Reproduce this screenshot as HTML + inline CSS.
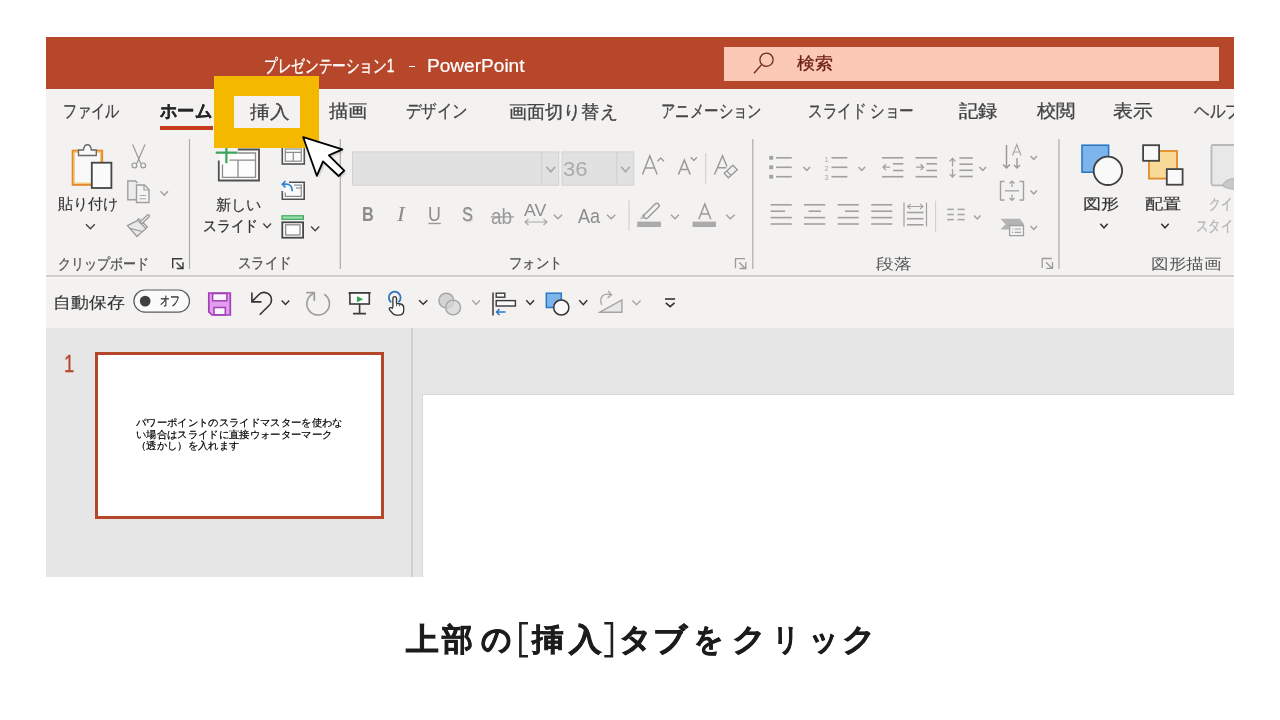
<!DOCTYPE html>
<html lang="ja"><head><meta charset="utf-8"><style>
*{margin:0;padding:0;box-sizing:border-box}
html,body{width:1280px;height:720px;overflow:hidden;background:#fff;font-family:"Liberation Sans",sans-serif}
.r{position:absolute}
.t{position:absolute;white-space:pre;line-height:1;transform-origin:0 0;-webkit-text-stroke:0.3px currentColor}
#shot{position:absolute;left:46px;top:37px;width:1188px;height:540px;overflow:hidden}
</style></head><body>
<div class="r" style="left:46px;top:37px;width:1188px;height:51.8px;background:#b7472a"></div>
<div class="r" style="left:724px;top:46.9px;width:495.2px;height:34.2px;background:#fcc9b7"></div>
<div class="r" style="left:46px;top:88.8px;width:1188px;height:187px;background:#f3f2f1"></div>
<div class="r" style="left:46px;top:277px;width:1188px;height:51px;background:#f3f2f1"></div>
<div class="r" style="left:46px;top:274.8px;width:1188px;height:2.6px;background:#d1cfcd"></div>
<div class="r" style="left:46px;top:277.4px;width:1188px;height:1.2px;background:#f8f7f6"></div>
<div class="r" style="left:46px;top:328px;width:1188px;height:249px;background:#e6e6e6"></div>
<div class="r" style="left:411.3px;top:328px;width:1.6px;height:249px;background:#d0d0d0"></div>
<div class="r" style="left:422px;top:394px;width:812px;height:183px;background:#d8d8d8"></div>
<div class="r" style="left:423px;top:395px;width:811px;height:182px;background:#fff"></div>
<div class="r" style="left:95.1px;top:352.3px;width:288.9px;height:166.4px;border:3.7px solid #b5462a;background:#fff"></div>
<div class="r" style="left:408.6px;top:65.7px;width:6px;height:1.5px;background:#fff"></div>
<div class="r" style="left:160px;top:125.8px;width:52.5px;height:4.6px;background:#c43e1c"></div>
<svg class="r" style="left:0;top:0" width="1280" height="720" viewBox="0 0 1280 720">
<circle cx="766.5" cy="59.7" r="6.6" fill="none" stroke="#6e2a1c" stroke-width="1.3"/><path d="M761.8 64.4L754 73.2" stroke="#6e2a1c" stroke-width="1.4"/>
<rect x="72.7" y="150.7" width="29.4" height="34.1" fill="#f9f9f9" stroke="#e3892b" stroke-width="2"/>
<rect x="74.2" y="152.2" width="26.4" height="31" fill="none" stroke="#f5c469" stroke-width="1.2"/>
<path d="M78.5 155.5V150H83.5Q84 144.8 87.4 144.8Q90.8 144.8 91.3 150H96.3V155.5Z" fill="#f9f9f9" stroke="#6a6a6a" stroke-width="1.4"/>
<rect x="91.8" y="162.7" width="19.6" height="25.3" fill="#fbfbfb" stroke="#454545" stroke-width="1.8"/>
<path d="M86 224.2L90.4 228.8L94.8 224.2" fill="none" stroke="#444" stroke-width="1.4"/>
<path d="M132.6 144.5L140.8 163.5M145 144.5L136.8 163.5" fill="none" stroke="#9a9a9a" stroke-width="1.2"/>
<circle cx="134.4" cy="165.4" r="2.4" fill="none" stroke="#9a9a9a" stroke-width="1.2"/><circle cx="143.2" cy="165.4" r="2.4" fill="none" stroke="#9a9a9a" stroke-width="1.2"/>
<path d="M136 199.8H127.8V181H135.5L137.5 183" fill="#ececec" stroke="#9e9e9e" stroke-width="1.4"/>
<path d="M136.5 185H144.5L149 189.5V202.5H136.5Z" fill="#f4f4f4" stroke="#9e9e9e" stroke-width="1.4"/><path d="M144 185V190H149" fill="none" stroke="#9e9e9e" stroke-width="1.2"/>
<path d="M139.5 195.5H146M139.5 198.8H146" stroke="#a8a8a8" stroke-width="1"/>
<path d="M160.5 191.2L164.25 195.2L168 191.2" fill="none" stroke="#a0a0a0" stroke-width="1.5"/>
<path d="M127.4 225.6L136.8 220.8L138.7 218.6L147.3 226.8L145.3 229.1L137 236.5Z" fill="#e8e8e8" stroke="#9a9a9a" stroke-width="1.3" stroke-linejoin="round"/>
<path d="M137.5 220.3L145.8 228.4M129.8 228.3L142.2 231.5" fill="none" stroke="#9a9a9a" stroke-width="1.2"/>
<path d="M141.8 222L148.3 215.9" stroke="#9a9a9a" stroke-width="3.8" stroke-linecap="round"/><path d="M141.8 222L148.3 215.9" stroke="#f3f2f1" stroke-width="1.2" stroke-linecap="round"/>
<path d="M172.7 268.3V258.7H182.3M176.5 262.5L182.5 268.5M183 262.3V268.5H176.8" fill="none" stroke="#3a3a3a" stroke-width="1.4"/>
<rect x="188.9" y="139" width="1.2" height="130" fill="#ababab"/>
<rect x="339.7" y="139" width="1.2" height="130" fill="#ababab"/>
<rect x="752.1999999999999" y="139" width="1.2" height="130" fill="#ababab"/>
<rect x="1058.4" y="139" width="1.2" height="130" fill="#ababab"/>
<path d="M237.8 149.5H259V180.5H218.8V160.5" fill="#fafafa" stroke="#505050" stroke-width="1.8"/><path d="M219.5 160.5V151H237.5" fill="#fafafa"/>
<path d="M238 153H255.5V177.3H222.5V164.5" fill="#fdfdfd" stroke="#8c8c8c" stroke-width="1.3"/>
<path d="M229.5 160.2H255.5M238 160.2V177.3" stroke="#8c8c8c" stroke-width="1.3"/>
<path d="M215.7 152.6H237.6M226.4 147V163.3" stroke="#3aa55b" stroke-width="2.2"/>
<rect x="282.3" y="146" width="22" height="18" fill="#fafafa" stroke="#505050" stroke-width="1.6"/>
<rect x="285.3" y="149" width="16" height="12.2" fill="#fafafa" stroke="#8c8c8c" stroke-width="1.2"/><path d="M285.3 152.4H301.3M293.3 152.4V161" stroke="#8c8c8c" stroke-width="1.2"/>
<path d="M289 182.3H304.2V199.3H282.3V191" fill="#fafafa" stroke="#505050" stroke-width="1.6"/>
<path d="M294 185.2H301.3V196.4H285.3V192.5" fill="none" stroke="#8c8c8c" stroke-width="1.2"/><path d="M296 188H301.3" stroke="#8c8c8c" stroke-width="1.2"/>
<path d="M292.2 191.3Q292.5 184.2 286 184.2H282.8M285.5 181L282.3 184.2L285.5 187.4" fill="none" stroke="#2e86d4" stroke-width="1.7"/>
<path d="M263.3 223.5L267.15 227.7L271 223.5" fill="none" stroke="#444" stroke-width="1.4"/>
<rect x="282" y="215.8" width="21.4" height="3.5" fill="#9fe0b0" stroke="#3aa55b" stroke-width="1.2"/>
<rect x="282.3" y="222.3" width="20.8" height="15.4" fill="#fdfdfd" stroke="#474747" stroke-width="1.8"/>
<rect x="285.6" y="224.8" width="14.4" height="10.2" fill="#fdfdfd" stroke="#8a8a8a" stroke-width="1.3"/>
<path d="M311.1 226.6L315.15 230.8L319.2 226.6" fill="none" stroke="#444" stroke-width="1.4"/>
<rect x="352.5" y="151.9" width="206.2" height="33.3" fill="#e1e1e1" stroke="#d2d2d2" stroke-width="1"/>
<rect x="541.2" y="152" width="1" height="33" fill="#cfcfcf"/>
<path d="M546.5 166.8L550.85 171.8L555.2 166.8" fill="none" stroke="#a6a6a6" stroke-width="1.5"/>
<rect x="562" y="151.9" width="71.8" height="33.3" fill="#e1e1e1" stroke="#d2d2d2" stroke-width="1"/>
<rect x="616.3" y="152" width="1" height="33" fill="#cfcfcf"/>
<path d="M621.2 166.8L625.5 171.8L629.8 166.8" fill="none" stroke="#a6a6a6" stroke-width="1.5"/>
<path d="M642.5 174.6L649.8 155.8L657.2 174.6M645.2 168H654.5" fill="none" stroke="#9a9a9a" stroke-width="1.5"/>
<path d="M657.5 161.3L660.7 158L664 161.3" fill="none" stroke="#9a9a9a" stroke-width="1.3"/>
<path d="M678.4 174.6L684.3 160L690.2 174.6M680.5 169.5H688" fill="none" stroke="#9a9a9a" stroke-width="1.5"/>
<path d="M690.8 157.3L693.8 160.5L696.9 157.3" fill="none" stroke="#9a9a9a" stroke-width="1.3"/>
<rect x="705.3" y="153" width="0.9" height="30.5" fill="#c8c8c8"/>
<path d="M714.5 174.5L722.5 155.8L727 166.5M717 167.7H726.3" fill="none" stroke="#9a9a9a" stroke-width="1.5"/>
<path d="M724.2 173.2L733 165.2L737.3 169.8L728.4 177.8Z" fill="#efefef" stroke="#9a9a9a" stroke-width="1.3"/><path d="M726.7 170.9L731 175.5" stroke="#9a9a9a" stroke-width="1.2"/>
<rect x="428.3" y="222.8" width="12.5" height="1.4" fill="#9a9a9a"/>
<rect x="490.8" y="216.3" width="23.2" height="1.2" fill="#9a9a9a"/>
<path d="M553.8 214.8L557.9 218.7L562 214.8" fill="none" stroke="#a0a0a0" stroke-width="1.5"/>
<path d="M525 222H547M528.5 219L525 222L528.5 225M543.5 219L547 222L543.5 225" fill="none" stroke="#a8a8a8" stroke-width="1.2"/>
<path d="M607 214.8L611.15 218.7L615.3 214.8" fill="none" stroke="#a0a0a0" stroke-width="1.5"/>
<rect x="628.6" y="200.5" width="0.9" height="30.5" fill="#c8c8c8"/>
<rect x="637.2" y="221.6" width="23.7" height="5.4" fill="#aaaaaa"/>
<path d="M639.8 219.6L643.2 213.6L647.6 217.6Z" fill="#bcbcbc"/><path d="M646.2 216.2L656.8 205.6" stroke="#9a9a9a" stroke-width="6" stroke-linecap="round"/><path d="M646.2 216.2L656.8 205.6" stroke="#f3f2f1" stroke-width="3.2" stroke-linecap="round"/>
<path d="M671 214.8L674.95 218.7L678.9 214.8" fill="none" stroke="#a0a0a0" stroke-width="1.5"/>
<path d="M698.8 219.3L704.8 204L710.8 219.3M700.8 214H708.8" fill="none" stroke="#9a9a9a" stroke-width="1.5"/>
<rect x="692.5" y="221.6" width="23.4" height="5.4" fill="#aaaaaa"/>
<path d="M726.1 214.8L730.35 218.7L734.6 214.8" fill="none" stroke="#a0a0a0" stroke-width="1.5"/>
<path d="M735.5 268.3V258.7H745.1M739.3 262.5L745.3 268.5M745.8 262.3V268.5H739.6" fill="none" stroke="#9a9a9a" stroke-width="1.3"/>
<path d="M1042.2 268.1V258.5H1051.8M1046.0 262.3L1052.0 268.3M1052.5 262.1V268.3H1046.3" fill="none" stroke="#9a9a9a" stroke-width="1.3"/>
<rect x="769.3" y="155.9" width="3.8" height="3.8" fill="#a0a0a0"/><rect x="769.3" y="165.4" width="3.8" height="3.8" fill="#a0a0a0"/><rect x="769.3" y="174.79999999999998" width="3.8" height="3.8" fill="#a0a0a0"/>
<path d="M776 157.8H791.8" stroke="#a0a0a0" stroke-width="1.6"/><path d="M776 167.3H791.8" stroke="#a0a0a0" stroke-width="1.6"/><path d="M776 176.7H791.8" stroke="#a0a0a0" stroke-width="1.6"/>
<path d="M803.5 167L806.75 170.5L810 167" fill="none" stroke="#a0a0a0" stroke-width="1.5"/>
<text x="824.6" y="161.5" font-size="7" fill="#a8a8a8" font-family="Liberation Sans">1</text><text x="824.6" y="170.8" font-size="7" fill="#a8a8a8" font-family="Liberation Sans">2</text><text x="824.6" y="180" font-size="7" fill="#a8a8a8" font-family="Liberation Sans">3</text>
<path d="M831.5 157.8H847.4" stroke="#a0a0a0" stroke-width="1.6"/><path d="M831.5 167.3H847.4" stroke="#a0a0a0" stroke-width="1.6"/><path d="M831.5 176.7H847.4" stroke="#a0a0a0" stroke-width="1.6"/>
<path d="M858.5 167L861.75 170.5L865 167" fill="none" stroke="#a0a0a0" stroke-width="1.5"/>
<path d="M882 157.8H903.4" stroke="#a0a0a0" stroke-width="1.6"/><path d="M882 176.7H903.4" stroke="#a0a0a0" stroke-width="1.6"/><path d="M893 163.8H903.4" stroke="#a0a0a0" stroke-width="1.6"/><path d="M893 170.5H903.4" stroke="#a0a0a0" stroke-width="1.6"/>
<path d="M890 167.2H883M886 164.3L883 167.2L886 170.1" fill="none" stroke="#a0a0a0" stroke-width="1.3"/>
<path d="M915.5 157.8H937" stroke="#a0a0a0" stroke-width="1.6"/><path d="M915.5 176.7H937" stroke="#a0a0a0" stroke-width="1.6"/><path d="M926.5 163.8H937" stroke="#a0a0a0" stroke-width="1.6"/><path d="M926.5 170.5H937" stroke="#a0a0a0" stroke-width="1.6"/>
<path d="M916 167.2H923.5M920.5 164.3L923.5 167.2L920.5 170.1" fill="none" stroke="#a0a0a0" stroke-width="1.3"/>
<path d="M959.4 158H972.8" stroke="#a0a0a0" stroke-width="1.6"/><path d="M959.4 164.2H972.8" stroke="#a0a0a0" stroke-width="1.6"/><path d="M959.4 170.3H972.8" stroke="#a0a0a0" stroke-width="1.6"/><path d="M959.4 176.5H972.8" stroke="#a0a0a0" stroke-width="1.6"/>
<path d="M952.5 158.5V166.5M949.6 161.4L952.5 158.5L955.4 161.4M952.5 169V177M949.6 174.1L952.5 177L955.4 174.1" fill="none" stroke="#a0a0a0" stroke-width="1.3"/>
<path d="M979.5 167L982.75 170.5L986 167" fill="none" stroke="#a0a0a0" stroke-width="1.5"/>
<path d="M1006.5 145V168M1003 164.5L1006.5 168L1010 164.5" fill="none" stroke="#9a9a9a" stroke-width="1.5"/>
<path d="M1012.5 155.5L1016.8 144.5L1021 155.5M1013.8 152H1019.8" fill="none" stroke="#a8a8a8" stroke-width="1.2"/>
<path d="M1017 158V168M1014 165L1017 168L1020 165" fill="none" stroke="#9a9a9a" stroke-width="1.4"/>
<path d="M1030.5 156L1033.75 159.5L1037 156" fill="none" stroke="#a0a0a0" stroke-width="1.5"/>
<path d="M1004.5 181.5H1000.5V200H1004.5M1019.5 181.5H1023.5V200H1019.5" fill="none" stroke="#a0a0a0" stroke-width="1.4"/>
<path d="M1005 190.8H1019M1012 181V187M1009.5 183.5L1012 181L1014.5 183.5M1012 194.5V200.5M1009.5 198L1012 200.5L1014.5 198" fill="none" stroke="#a0a0a0" stroke-width="1.2"/>
<path d="M1030.5 190.5L1033.75 194L1037 190.5" fill="none" stroke="#a0a0a0" stroke-width="1.5"/>
<path d="M1000.4 218.8H1019.9L1024 224.2L1019.9 229.6H1000.4L1005.6 224.2Z" fill="#b3b3b3"/>
<rect x="1009.6" y="225.6" width="13.9" height="10" fill="#f3f3f3" stroke="#a0a0a0" stroke-width="1.3"/>
<path d="M1012 229H1013.2M1014.6 229H1021M1012 232.4H1013.2M1014.6 232.4H1021" stroke="#a4a4a4" stroke-width="1.1"/>
<path d="M1030.5 226L1033.75 229.5L1037 226" fill="none" stroke="#a0a0a0" stroke-width="1.5"/>
<path d="M770.6 204.8H791.8" stroke="#a0a0a0" stroke-width="1.6"/><path d="M770.6 224H791.8" stroke="#a0a0a0" stroke-width="1.6"/><path d="M770.6 211.2H785" stroke="#a0a0a0" stroke-width="1.6"/><path d="M770.6 217.6H791.8" stroke="#a0a0a0" stroke-width="1.6"/>
<path d="M804 204.8H825.3" stroke="#a0a0a0" stroke-width="1.6"/><path d="M804 217.6H825.3" stroke="#a0a0a0" stroke-width="1.6"/><path d="M804 224H825.3" stroke="#a0a0a0" stroke-width="1.6"/><path d="M808.5 211.2H821" stroke="#a0a0a0" stroke-width="1.6"/>
<path d="M837.7 204.8H858.8" stroke="#a0a0a0" stroke-width="1.6"/><path d="M837.7 217.6H858.8" stroke="#a0a0a0" stroke-width="1.6"/><path d="M837.7 224H858.8" stroke="#a0a0a0" stroke-width="1.6"/><path d="M845 211.2H858.8" stroke="#a0a0a0" stroke-width="1.6"/>
<path d="M871.2 204.8H892.3" stroke="#a0a0a0" stroke-width="1.6"/><path d="M871.2 211.2H892.3" stroke="#a0a0a0" stroke-width="1.6"/><path d="M871.2 217.6H892.3" stroke="#a0a0a0" stroke-width="1.6"/><path d="M871.2 224H892.3" stroke="#a0a0a0" stroke-width="1.6"/>
<path d="M904 202.5V226.5M926.5 202.5V226.5" stroke="#a0a0a0" stroke-width="1.2"/><path d="M907 212.5H923.5" stroke="#a0a0a0" stroke-width="1.6"/><path d="M907 218.7H923.5" stroke="#a0a0a0" stroke-width="1.6"/><path d="M907 224.8H923.5" stroke="#a0a0a0" stroke-width="1.6"/>
<path d="M907.5 206.5H923M910.5 203.8L907.5 206.5L910.5 209.2M920 203.8L923 206.5L920 209.2" fill="none" stroke="#a0a0a0" stroke-width="1.1"/>
<rect x="935.2" y="200.7" width="0.9" height="31" fill="#c8c8c8"/>
<path d="M947.2 209.4H953.8" stroke="#a8a8a8" stroke-width="1.6"/><path d="M947.2 214.5H953.8" stroke="#a8a8a8" stroke-width="1.6"/><path d="M947.2 219.6H953.8" stroke="#a8a8a8" stroke-width="1.6"/><path d="M957.5 209.4H964.7" stroke="#a8a8a8" stroke-width="1.6"/><path d="M957.5 214.5H964.7" stroke="#a8a8a8" stroke-width="1.6"/><path d="M957.5 219.6H964.7" stroke="#a8a8a8" stroke-width="1.6"/>
<path d="M974 215.5L977.25 219L980.5 215.5" fill="none" stroke="#a0a0a0" stroke-width="1.5"/>
<rect x="1082" y="145.2" width="26.6" height="27" fill="#7cb4ec" stroke="#2b79c2" stroke-width="1.6"/>
<circle cx="1107.9" cy="170.8" r="14.2" fill="#f9f9f9" stroke="#404040" stroke-width="1.8"/>
<path d="M1100.3 223.8L1104.0 227.8L1107.7 223.8" fill="none" stroke="#333" stroke-width="1.5"/>
<rect x="1149" y="151" width="28" height="27.6" fill="#f9d998" stroke="#e08a2a" stroke-width="1.8"/>
<rect x="1143.1" y="145.2" width="16" height="15.6" fill="#f9f9f9" stroke="#444" stroke-width="1.8"/>
<rect x="1166.8" y="169.1" width="15.8" height="15.6" fill="#f9f9f9" stroke="#444" stroke-width="1.8"/>
<path d="M1161.3 223.8L1165.0 227.8L1168.7 223.8" fill="none" stroke="#333" stroke-width="1.5"/>
<path d="M1211.5 146.5Q1211.5 145 1213 145H1240V178Q1230 178 1228 185.3H1213Q1211.5 185.3 1211.5 183.8Z" fill="#e8e8e8" stroke="#b8b8b8" stroke-width="1.8"/>
<path d="M1222.5 185.4Q1226 178.6 1236 178.3V189Q1228 189.5 1222.5 185.4Z" fill="#c8c8c8" stroke="#b8b8b8" stroke-width="1.3"/>
<rect x="133.9" y="290" width="55.6" height="22.2" rx="11.1" fill="#fbfbfb" stroke="#5a5a5a" stroke-width="1.2"/>
<circle cx="145.2" cy="301.1" r="5.4" fill="#404040"/>
<path d="M208.8 293H230.3V315H212L208.8 311.8Z" fill="#e59cef" stroke="#a040b5" stroke-width="1.7"/>
<rect x="212.6" y="293.5" width="14.3" height="7.3" fill="#faf4fb" stroke="#a040b5" stroke-width="1.5"/>
<rect x="214" y="307.5" width="11.3" height="7.3" fill="#faf4fb" stroke="#a040b5" stroke-width="1.5"/>
<path d="M251.9 292.5V301.9H261.5M252.3 301.3L258.7 294.7A7.5 7.5 0 0 1 271.5 300A7.5 7.5 0 0 1 269.3 305.3L259.7 314.8" fill="none" stroke="#333" stroke-width="1.6"/>
<path d="M281.7 300.5L285.5 304.4L289.3 300.5" fill="none" stroke="#333" stroke-width="1.5"/>
<path d="M324.2 294.2A11.3 11.3 0 1 1 313.6 293.4" fill="none" stroke="#9c9c9c" stroke-width="1.6"/><path d="M306.2 292.6H314.3V300.9" fill="none" stroke="#9c9c9c" stroke-width="1.7"/>
<path d="M348.6 293H370.5" stroke="#3a3a3a" stroke-width="1.8"/><rect x="349.9" y="293" width="19.4" height="11" fill="#fafafa" stroke="#3a3a3a" stroke-width="1.6"/>
<path d="M359.6 304V313.5M353 313.6H366" stroke="#3a3a3a" stroke-width="1.6"/><path d="M357 296.2L363.2 299.2L357 302.2Z" fill="#2ea352"/>
<path d="M391.2 302.3A5.9 5.9 0 1 1 398.4 302.2" fill="none" stroke="#2f75ba" stroke-width="1.8"/>
<path d="M392.9 307.5V298.6Q392.9 296.6 394.7 296.6Q396.5 296.6 396.5 298.6V303.3L400.5 304Q403.7 304.6 403.7 307.5V310.5Q403.7 315.2 398.5 315.2H396.5Q394 315.2 392.3 313L389.4 309.6Q388.8 308 390.3 307.6Q391.5 307.3 392.9 308.8" fill="#fafafa" stroke="#333" stroke-width="1.3"/><path d="M396.6 303.3V306.2M399.6 303.8V306.2" stroke="#555" stroke-width="1"/>
<path d="M419.1 300.3L423.20000000000005 304.3L427.3 300.3" fill="none" stroke="#333" stroke-width="1.5"/>
<circle cx="446.3" cy="300.6" r="7.4" fill="#d4d4d4" stroke="#a4a4a4" stroke-width="1.4"/><circle cx="453.1" cy="307.5" r="7.4" fill="#d4d4d4" fill-opacity="0.7" stroke="#a4a4a4" stroke-width="1.4"/>
<path d="M472.3 300.3L476.15 304.5L480 300.3" fill="none" stroke="#a8a8a8" stroke-width="1.5"/>
<path d="M493 292.5V315.6" stroke="#3a3a3a" stroke-width="1.5"/><rect x="496.2" y="293.2" width="8.6" height="4" fill="#fafafa" stroke="#3a3a3a" stroke-width="1.4"/><rect x="496.2" y="300.6" width="19.2" height="5.4" fill="#fafafa" stroke="#3a3a3a" stroke-width="1.4"/>
<path d="M505.5 312H496.5M499.5 309L496.5 312L499.5 315" fill="none" stroke="#2b79c2" stroke-width="1.5"/>
<path d="M526.3 300.3L530.15 304.5L534 300.3" fill="none" stroke="#333" stroke-width="1.5"/>
<rect x="546.3" y="293.2" width="15" height="14.3" fill="#7cb4ec" stroke="#2b79c2" stroke-width="1.5"/><circle cx="561.3" cy="307.5" r="7.6" fill="#f9f9f9" stroke="#333" stroke-width="1.5"/>
<path d="M579.3 300.2L583.25 304.7L587.2 300.2" fill="none" stroke="#333" stroke-width="1.5"/>
<path d="M600 312.2L621.9 300V312.2Z" fill="#e8e8e8" stroke="#a4a4a4" stroke-width="1.4"/>
<path d="M601.8 305Q599 299 603 295.5Q606 293 611 294.8M608.2 291L611.5 294.8L607.5 298" fill="none" stroke="#a4a4a4" stroke-width="1.3"/>
<path d="M632.4 300.5L636.5 304.7L640.6 300.5" fill="none" stroke="#a8a8a8" stroke-width="1.5"/>
<path d="M665 299H675.1" stroke="#333" stroke-width="1.6"/><path d="M665.8 302.8L670.15 306.6L674.5 302.8" fill="none" stroke="#333" stroke-width="1.6"/>
</svg>
<div id="txt">
<div class="t" style="left:264.0px;top:57.0px;font-family:'Liberation Sans',sans-serif;font-size:18px;font-weight:400;color:#ffffff;transform:scaleX(0.7573);-webkit-text-stroke:0.4px #fff;">プレゼンテーション1</div>
<div class="t" style="left:426.7px;top:57.35px;font-family:'Liberation Sans',sans-serif;font-size:18px;font-weight:400;color:#ffffff;transform:scaleX(1.0594);-webkit-text-stroke:0.2px #fff;">PowerPoint</div>
<div class="t" style="left:797.0px;top:55.35px;font-family:'Liberation Sans',sans-serif;font-size:17px;font-weight:400;color:#6e1d12;transform:scaleX(1.0606);">検索</div>
<div class="t" style="left:62.75px;top:103.38px;font-family:'Liberation Sans',sans-serif;font-size:17.5px;font-weight:400;color:#444444;transform:scaleX(0.7857);">ファイル</div>
<div class="t" style="left:160.0px;top:103.05px;font-family:'Liberation Sans',sans-serif;font-size:17.5px;font-weight:700;color:#262626;transform:scaleX(0.9586);">ホーム</div>
<div class="t" style="left:250.3px;top:103.85px;font-family:'Liberation Sans',sans-serif;font-size:17.5px;font-weight:400;color:#444444;transform:scaleX(1.0951);">挿入</div>
<div class="t" style="left:328.5px;top:103.4px;font-family:'Liberation Sans',sans-serif;font-size:17.5px;font-weight:400;color:#444444;transform:scaleX(1.0716);">描画</div>
<div class="t" style="left:405.9px;top:102.9px;font-family:'Liberation Sans',sans-serif;font-size:17.5px;font-weight:400;color:#444444;transform:scaleX(0.8574);">デザイン</div>
<div class="t" style="left:508.8px;top:103.75px;font-family:'Liberation Sans',sans-serif;font-size:17.5px;font-weight:400;color:#444444;transform:scaleX(1.0058);">画面切り替え</div>
<div class="t" style="left:660.9px;top:103.35px;font-family:'Liberation Sans',sans-serif;font-size:17.5px;font-weight:400;color:#444444;transform:scaleX(0.8);">アニメーション</div>
<div class="t" style="left:807.6px;top:103.05px;font-family:'Liberation Sans',sans-serif;font-size:17.5px;font-weight:400;color:#444444;transform:scaleX(0.8094);">スライド ショー</div>
<div class="t" style="left:958.8px;top:103.4px;font-family:'Liberation Sans',sans-serif;font-size:17.5px;font-weight:400;color:#444444;transform:scaleX(1.0757);">記録</div>
<div class="t" style="left:1036.5px;top:103.4px;font-family:'Liberation Sans',sans-serif;font-size:17.5px;font-weight:400;color:#444444;transform:scaleX(1.072);">校閲</div>
<div class="t" style="left:1112.5px;top:103.4px;font-family:'Liberation Sans',sans-serif;font-size:17.5px;font-weight:400;color:#444444;transform:scaleX(1.1057);">表示</div>
<div class="t" style="left:1193.6px;top:103.15px;font-family:'Liberation Sans',sans-serif;font-size:17.5px;font-weight:400;color:#444444;transform:scaleX(0.8669);">ヘルプ</div>
<div class="t" style="left:58.3px;top:196.15px;font-family:'Liberation Sans',sans-serif;font-size:15px;font-weight:400;color:#333;transform:scaleX(1.0085);-webkit-text-stroke:0.15px currentColor;">貼り付け</div>
<div class="t" style="left:57.8px;top:255.95px;font-family:'Liberation Sans',sans-serif;font-size:15px;font-weight:400;color:#555;transform:scaleX(0.8694);">クリップボード</div>
<div class="t" style="left:216.3px;top:196.65px;font-family:'Liberation Sans',sans-serif;font-size:15px;font-weight:400;color:#333;transform:scaleX(1.0117);-webkit-text-stroke:0.15px currentColor;">新しい</div>
<div class="t" style="left:203.2px;top:217.75px;font-family:'Liberation Sans',sans-serif;font-size:15px;font-weight:400;color:#333;transform:scaleX(0.9211);">スライド</div>
<div class="t" style="left:238.2px;top:255.25px;font-family:'Liberation Sans',sans-serif;font-size:15px;font-weight:400;color:#555;transform:scaleX(0.8983);">スライド</div>
<div class="t" style="left:509.0px;top:255.4px;font-family:'Liberation Sans',sans-serif;font-size:15px;font-weight:400;color:#555;transform:scaleX(0.8932);">フォント</div>
<div class="t" style="left:876.3px;top:255.5px;font-family:'Liberation Sans',sans-serif;font-size:15px;font-weight:400;color:#555;transform:scaleX(1.1863);-webkit-text-stroke:0;">段落</div>
<div class="t" style="left:1151.0px;top:256.25px;font-family:'Liberation Sans',sans-serif;font-size:15px;font-weight:400;color:#555;transform:scaleX(1.1764);-webkit-text-stroke:0;">図形描画</div>
<div class="t" style="left:1083.4px;top:195.75px;font-family:'Liberation Sans',sans-serif;font-size:15px;font-weight:400;color:#333;transform:scaleX(1.2164);-webkit-text-stroke:0.15px currentColor;">図形</div>
<div class="t" style="left:1144.8px;top:195.75px;font-family:'Liberation Sans',sans-serif;font-size:15px;font-weight:400;color:#333;transform:scaleX(1.2143);-webkit-text-stroke:0.15px currentColor;">配置</div>
<div class="t" style="left:52.6px;top:295.0px;font-family:'Liberation Sans',sans-serif;font-size:15.5px;font-weight:400;color:#333;transform:scaleX(1.118);-webkit-text-stroke:0.15px currentColor;">自動保存</div>
<div class="t" style="left:563.4px;top:159.05px;font-family:'Liberation Sans',sans-serif;font-size:20.18px;font-weight:400;color:#ababab;transform:scaleX(1.0975);-webkit-text-stroke:0;">36</div>
<div class="t" style="left:405.6px;top:624.4px;font-family:'Liberation Sans',sans-serif;font-size:31px;font-weight:700;color:#1c1c1c;transform:scaleX(1.0556);-webkit-text-stroke:0.7px #1c1c1c;">上</div>
<div class="t" style="left:442.2px;top:624.4px;font-family:'Liberation Sans',sans-serif;font-size:31px;font-weight:700;color:#1c1c1c;transform:scaleX(0.9914);-webkit-text-stroke:0.7px #1c1c1c;">部</div>
<div class="t" style="left:480.6px;top:624.4px;font-family:'Liberation Sans',sans-serif;font-size:31px;font-weight:700;color:#1c1c1c;transform:scaleX(0.9677);-webkit-text-stroke:0.7px #1c1c1c;">の</div>
<div class="t" style="left:532.3px;top:624.4px;font-family:'Liberation Sans',sans-serif;font-size:31px;font-weight:700;color:#1c1c1c;transform:scaleX(1.0357);-webkit-text-stroke:0.7px #1c1c1c;">挿</div>
<div class="t" style="left:568.8px;top:624.4px;font-family:'Liberation Sans',sans-serif;font-size:31px;font-weight:700;color:#1c1c1c;transform:scaleX(1.0501);-webkit-text-stroke:0.7px #1c1c1c;">入</div>
<div class="t" style="left:619.2px;top:624.4px;font-family:'Liberation Sans',sans-serif;font-size:31px;font-weight:700;color:#1c1c1c;transform:scaleX(1.0508);-webkit-text-stroke:0.7px #1c1c1c;">タ</div>
<div class="t" style="left:653.4px;top:624.4px;font-family:'Liberation Sans',sans-serif;font-size:31px;font-weight:700;color:#1c1c1c;transform:scaleX(1.0872);-webkit-text-stroke:0.7px #1c1c1c;">ブ</div>
<div class="t" style="left:694.4px;top:624.4px;font-family:'Liberation Sans',sans-serif;font-size:31px;font-weight:700;color:#1c1c1c;transform:scaleX(0.9324);-webkit-text-stroke:0.7px #1c1c1c;">を</div>
<div class="t" style="left:731.5px;top:624.4px;font-family:'Liberation Sans',sans-serif;font-size:31px;font-weight:700;color:#1c1c1c;transform:scaleX(1.0887);-webkit-text-stroke:0.7px #1c1c1c;">ク</div>
<div class="t" style="left:772.5px;top:624.4px;font-family:'Liberation Sans',sans-serif;font-size:31px;font-weight:700;color:#1c1c1c;transform:scaleX(0.8233);-webkit-text-stroke:0.7px #1c1c1c;">リ</div>
<div class="t" style="left:808.6px;top:624.4px;font-family:'Liberation Sans',sans-serif;font-size:31px;font-weight:700;color:#1c1c1c;transform:scaleX(0.9364);-webkit-text-stroke:0.7px #1c1c1c;">ッ</div>
<div class="t" style="left:841.9px;top:624.4px;font-family:'Liberation Sans',sans-serif;font-size:31px;font-weight:700;color:#1c1c1c;transform:scaleX(1.0764);-webkit-text-stroke:0.7px #1c1c1c;">ク</div>
<div class="t" style="left:64.2px;top:352.6px;font-family:'Liberation Sans',sans-serif;font-size:23.19px;font-weight:400;color:#b5462a;transform:scaleX(0.7941);-webkit-text-stroke:0.3px #b5462a;">1</div>
<div class="t" style="left:362.3px;top:204.95px;font-family:'Liberation Sans',sans-serif;font-size:19.57px;font-weight:700;color:#8c8c8c;transform:scaleX(0.8329);-webkit-text-stroke:0;">B</div>
<div class="t" style="left:397.1px;top:203.95px;font-family:'Liberation Serif',serif;font-size:21.08px;font-weight:400;color:#8c8c8c;transform:scaleX(1.1172);-webkit-text-stroke:0;font-style:italic;">I</div>
<div class="t" style="left:428.0px;top:204.95px;font-family:'Liberation Sans',sans-serif;font-size:19.57px;font-weight:400;color:#8c8c8c;transform:scaleX(0.9109);-webkit-text-stroke:0;">U</div>
<div class="t" style="left:461.9px;top:204.95px;font-family:'Liberation Sans',sans-serif;font-size:19.57px;font-weight:400;color:#8c8c8c;transform:scaleX(0.8275);-webkit-text-stroke:0.15px #8c8c8c;text-shadow:1px 1px 1px rgba(0,0,0,.18);">S</div>
<div class="t" style="left:491.1px;top:206.6px;font-family:'Liberation Sans',sans-serif;font-size:21.28px;font-weight:400;color:#9a9a9a;transform:scaleX(0.896);-webkit-text-stroke:0;">ab</div>
<div class="t" style="left:524.0px;top:202.9px;font-family:'Liberation Sans',sans-serif;font-size:16.91px;font-weight:400;color:#8c8c8c;transform:scaleX(1.0476);-webkit-text-stroke:0;">AV</div>
<div class="t" style="left:577.9px;top:205.7px;font-family:'Liberation Sans',sans-serif;font-size:20.31px;font-weight:400;color:#8c8c8c;transform:scaleX(0.8875);-webkit-text-stroke:0;">Aa</div>
<div class="t" style="left:1209.0px;top:195.5px;font-family:'Liberation Sans',sans-serif;font-size:15px;font-weight:400;color:#b4b4b4;transform:scaleX(0.7774);">クイ</div>
<div class="t" style="left:1195.6px;top:217.75px;font-family:'Liberation Sans',sans-serif;font-size:15px;font-weight:400;color:#b4b4b4;transform:scaleX(0.8194);">スタイ</div>
<div class="t" style="left:160.3px;top:294.65px;font-family:'Liberation Sans',sans-serif;font-size:12.5px;font-weight:400;color:#333;transform:scaleX(0.7691);">オフ</div>
</div>
<div class="r" style="left:1234px;top:30px;width:46px;height:560px;background:#fff"></div>
<div class="t" style="left:135.5px;top:416.8px;font-size:9.6px;color:#000;line-height:11.7px;-webkit-text-stroke:0.2px #000;transform:scaleX(1.034)">パワーポイントのスライドマスターを使わな<br>い場合はスライドに直接ウォーターマーク<br>（透かし）を入れます</div>
<div class="r" style="left:214.2px;top:76.2px;width:104.6px;height:71.4px;border:20px solid #f5b800;border-right-width:19.6px;border-bottom-width:20.4px"></div>
<svg class="r" style="left:0;top:0" width="1280" height="720" viewBox="0 0 1280 720">
<path d="M528 623.3H520.4V656.3H528M604.3 623.3H611.9V656.3H604.3" fill="none" stroke="#1f1f1f" stroke-width="2.6"/>
<defs><filter id="sh" x="-50%" y="-50%" width="200%" height="200%"><feGaussianBlur stdDeviation="1.2"/></filter></defs>
<path d="M303.2 137.2L342.4 149.4L328.9 155.3L344.2 170.6L338.6 176L323 161.4L316.8 175.8Z" fill="#000" opacity="0.25" transform="translate(1.5,1.5)" filter="url(#sh)"/>
<path d="M303.2 137.2L342.4 149.4L328.9 155.3L344.2 170.6L338.6 176L323 161.4L316.8 175.8Z" fill="#fff" stroke="#000" stroke-width="1.8" stroke-linejoin="round"/>
</svg>
</body></html>
